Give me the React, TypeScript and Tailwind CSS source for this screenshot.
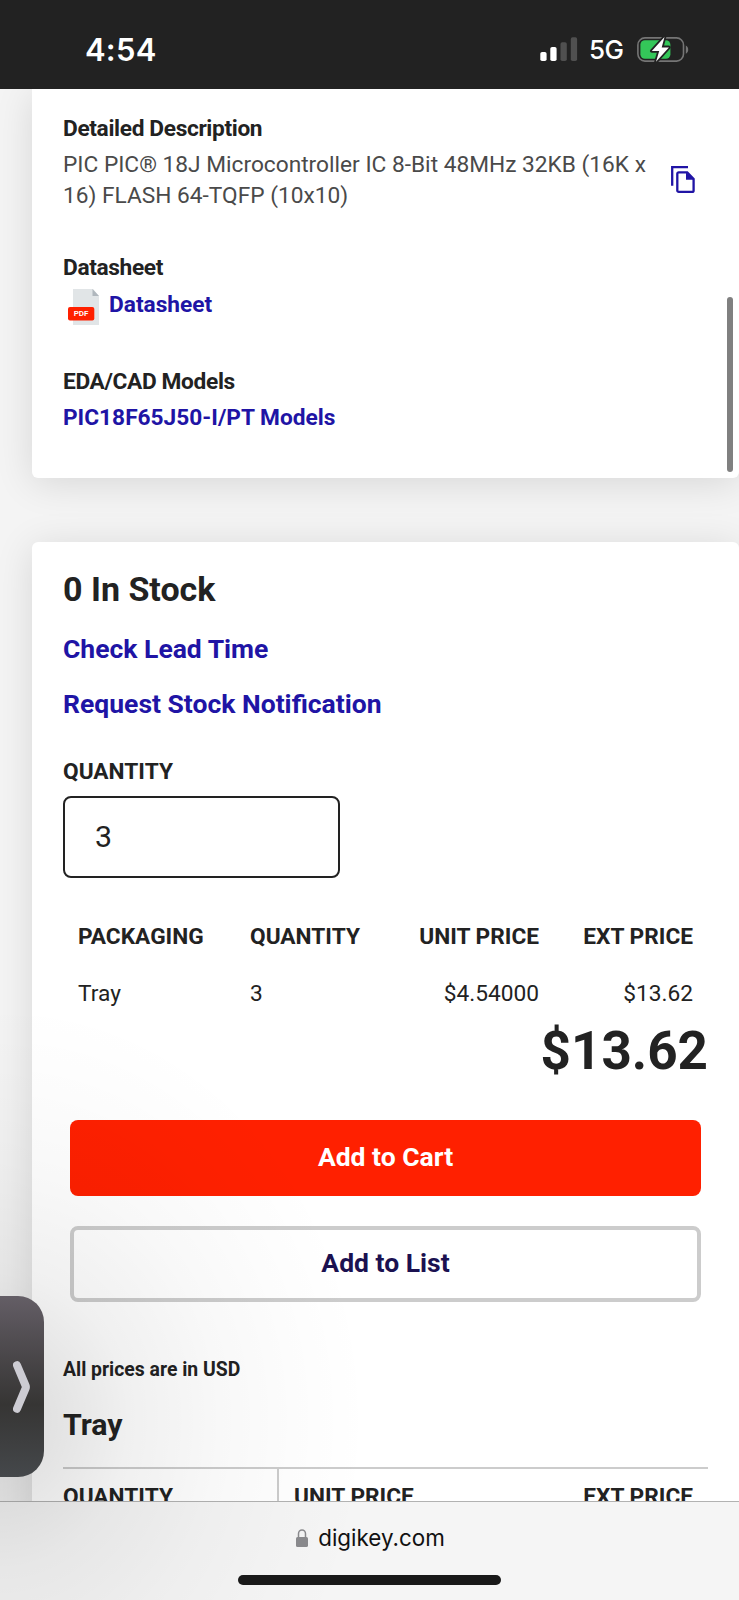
import React from "react";

const prices = [{ packaging: "Tray", quantity: "3", unit: "$4.54000", ext: "$13.62" }];

const StatusBar = () => {
  return (
    <div className="flex h-[89px] shrink-0 items-center justify-between bg-[#222222] pr-[50px] pl-[85px] pt-[10px] text-white">
      <div className="font-[Inter] text-[31px] leading-[40px] font-semibold tracking-[0.2px]">4:54</div>
      <div className="flex items-center">
        <svg width="38" height="25" viewBox="0 0 38 25">
          <rect x="0.3" y="15" width="6.3" height="9" rx="1.8" fill="#fff" />
          <rect x="10.3" y="10" width="6.3" height="14" rx="1.8" fill="#fff" />
          <rect x="20.5" y="5.3" width="6.3" height="18.7" rx="1.8" fill="#505050" />
          <rect x="30.8" y="0.2" width="6.3" height="23.8" rx="1.8" fill="#505050" />
        </svg>
        <div className="mt-[1px] ml-[11px] w-[36px] font-[Inter] text-[26px] leading-[30px] font-medium tracking-[-0.5px]">
          5G
        </div>
        <svg className="ml-[12px]" width="52" height="27" viewBox="0 0 52 27">
          <rect x="0.9" y="1.9" width="45.6" height="23.2" rx="7" fill="none" stroke="#757575" strokeWidth="1.6" />
          <rect x="3.4" y="4.3" width="30" height="18.4" rx="4.5" fill="#34c759" />
          <path d="M48.8 9.5c3.2 1.3 3.2 7 0 8.2z" fill="#757575" />
          <path
            d="M27.5 1 14.8 14.9h7.4L19 25.8l12.9-14.4h-7.2z"
            fill="#fff"
            stroke="#222"
            strokeWidth="3.6"
            strokeLinejoin="round"
            paintOrder="stroke"
          />
        </svg>
      </div>
    </div>
  );
};

const PdfIcon = () => {
  return (
    <div className="relative ml-[5px] h-[36px] w-[31px]">
      <svg width="31" height="36" viewBox="0 0 31 36">
        <path d="M5 0h20l6 7v29H5z" fill="#e1e5e7" />
        <path d="M24.5 0 31 7h-6.5z" fill="#b0b7bd" />
        <rect x="0" y="18" width="26.3" height="13.6" rx="2" fill="#ff2000" />
      </svg>
      <span className="absolute top-[18px] left-0 w-[26px] text-center text-[8px] leading-[14px] font-semibold text-white">
        PDF
      </span>
    </div>
  );
};

const CopyIcon = () => {
  return (
    <svg width="24" height="28" viewBox="0 0 24 28">
      <path d="M17 1.2H1.2v18.6" fill="none" stroke="#2014a5" strokeWidth="2.3" />
      <path
        d="M7.8 6.3h8.4L22.6 13v11.4c0 .9-.6 1.5-1.5 1.5H7.8c-.9 0-1.5-.6-1.5-1.5V7.8c0-.9.6-1.5 1.5-1.5z"
        fill="none"
        stroke="#2014a5"
        strokeWidth="2.3"
      />
      <path d="M15 6.2v7.6h7.8z" fill="#2014a5" />
    </svg>
  );
};

const Details = () => {
  return (
    <section className="ml-8 h-[389px] rounded-b-[6px] bg-white pt-[25px] pl-[31px] text-[22.7px] leading-[30.3px] shadow-[0_5px_38px_rgba(0,0,0,0.12)]">
      <h3 className="font-bold tracking-[-0.35px]">Detailed Description</h3>
      <div className="mt-[6px] flex">
        <p className="w-[600px] text-[#4a4a4a]">
          PIC PIC® 18J Microcontroller IC 8-Bit 48MHz 32KB (16K x 16) FLASH 64-TQFP (10x10)
        </p>
        <div className="mt-[16px] ml-[8px]">
          <CopyIcon />
        </div>
      </div>
      <h3 className="mt-[42px] font-bold tracking-[-0.35px]">Datasheet</h3>
      <div className="mt-[6px] flex">
        <PdfIcon />
        <a className="mt-[1px] ml-[10px] font-bold text-[#2014a5]">Datasheet</a>
      </div>
      <h3 className="mt-[42px] font-bold tracking-[-0.35px]">EDA/CAD Models</h3>
      <a className="mt-[6px] block font-bold text-[#2014a5]">PIC18F65J50-I/PT Models</a>
    </section>
  );
};

const Stock = () => {
  return (
    <section className="mt-[64px] ml-8 h-[1100px] rounded-t-[6px] bg-white pt-[27px] pr-[31px] pl-[31px] text-[22.7px] leading-[30px] shadow-[0_5px_38px_rgba(0,0,0,0.12)]">
      <h2 className="text-[34px] leading-[40px] font-bold">0 In Stock</h2>
      <a className="mt-[24px] block text-[26.5px] leading-[32px] font-bold text-[#2014a5]">Check Lead Time</a>
      <a className="mt-[23px] block text-[26.5px] leading-[32px] font-bold text-[#2014a5]">
        Request Stock Notification
      </a>
      <div className="mt-[37px] font-bold">QUANTITY</div>
      <div className="mt-[9px] flex h-[82px] w-[277px] items-center rounded-[8px] border-2 border-[#222222] pl-[30px] text-[30.3px]">
        3
      </div>
      <div className="mt-[44px] flex px-[15px] font-bold">
        <div className="w-[172px]">PACKAGING</div>
        <div className="w-[110px]">QUANTITY</div>
        <div className="w-[179px] text-right">UNIT PRICE</div>
        <div className="flex-1 text-right">EXT PRICE</div>
      </div>
      {prices.map((row) => (
        <div key={row.packaging} className="mt-[27px] flex px-[15px]">
          <div className="w-[172px]">{row.packaging}</div>
          <div className="w-[110px]">{row.quantity}</div>
          <div className="w-[179px] text-right">{row.unit}</div>
          <div className="flex-1 text-right">{row.ext}</div>
        </div>
      ))}
      <div className="mt-[11px] text-right text-[53px] leading-[62px] font-bold">$13.62</div>
      <div className="mt-[38px] px-[7px] text-[26.5px] font-bold">
        <button className="flex h-[76px] w-full items-center justify-center rounded-[8px] bg-[#ff2000] pb-[3px] text-white">
          Add to Cart
        </button>
        <button className="mt-[30px] flex h-[76px] w-full items-center justify-center rounded-[8px] border-4 border-[#cccccc] pb-[3px] text-[#1b1150]">
          Add to List
        </button>
      </div>
      <div className="mt-[55px] text-[19.4px] leading-[26px] font-bold">All prices are in USD</div>
      <h2 className="mt-[24px] text-[30.3px] leading-[36px] font-bold">Tray</h2>
      <div className="mt-[24px] flex border-t-2 border-[#cccccc] font-bold">
        <div className="w-[216px] border-r-2 border-[#cccccc] pt-[13px] pb-[15px]">QUANTITY</div>
        <div className="pt-[13px] pl-[15px]">UNIT PRICE</div>
        <div className="flex-1 pt-[13px] pr-[15px] text-right">EXT PRICE</div>
      </div>
    </section>
  );
};

const BrowserBar = () => {
  return (
    <div className="flex h-[99px] shrink-0 flex-col items-center border-t border-[#b2b2b2] bg-[#f5f5f5]">
      <div className="mt-[20px] flex items-center pl-[2px]">
        <svg width="12" height="18" viewBox="0 0 12 18">
          <path d="M2.5 9V4.8a3.5 3.8 0 0 1 7 0V9" fill="none" stroke="#8a8a8d" strokeWidth="1.5" />
          <rect x="0" y="8" width="12" height="10" rx="1.6" fill="#8a8a8d" />
        </svg>
        <span className="ml-[10px] font-[Inter] text-[22.4px] leading-[32px] text-[#111111]">digikey.com</span>
      </div>
      <div className="mt-[21px] h-[10px] w-[263px] rounded-full bg-[#191919]" />
    </div>
  );
};

const App = () => {
  return (
    <div className="relative flex h-[1600px] w-[739px] flex-col overflow-hidden bg-[#f4f4f4] font-[Roboto,sans-serif] text-[#222222]">
      <StatusBar />
      <main className="min-h-0 flex-1 overflow-hidden">
        <Details />
        <Stock />
      </main>
      <BrowserBar />
      {/* scroll thumb */}
      <div className="absolute top-[297px] right-[6px] h-[175px] w-[6px] rounded-full bg-[#808080]" />
      {/* picture-in-picture handle with its soft shadow */}
      <div className="absolute top-[900px] left-0 h-[700px] w-[420px] bg-[radial-gradient(370px_420px_at_0px_520px,rgba(0,0,0,0.14)_0%,rgba(0,0,0,0.11)_15%,rgba(0,0,0,0.06)_35%,rgba(0,0,0,0.028)_60%,rgba(0,0,0,0.01)_80%,transparent_100%)]" />
      <div className="absolute top-[1296px] left-0 flex h-[181px] w-[44px] items-center rounded-r-[26px] bg-linear-to-b from-[#645e66] via-[#363534] via-60% to-[#45484b] pl-[13px]">
        <svg width="18" height="52" viewBox="0 0 18 52">
          <path
            d="M4 4.2 12.6 24.6q.6 1.4 0 2.8L4 47.8"
            fill="none"
            stroke="#cdccd3"
            strokeWidth="8"
            strokeLinecap="round"
            strokeLinejoin="round"
          />
        </svg>
      </div>
    </div>
  );
};

export default App;
